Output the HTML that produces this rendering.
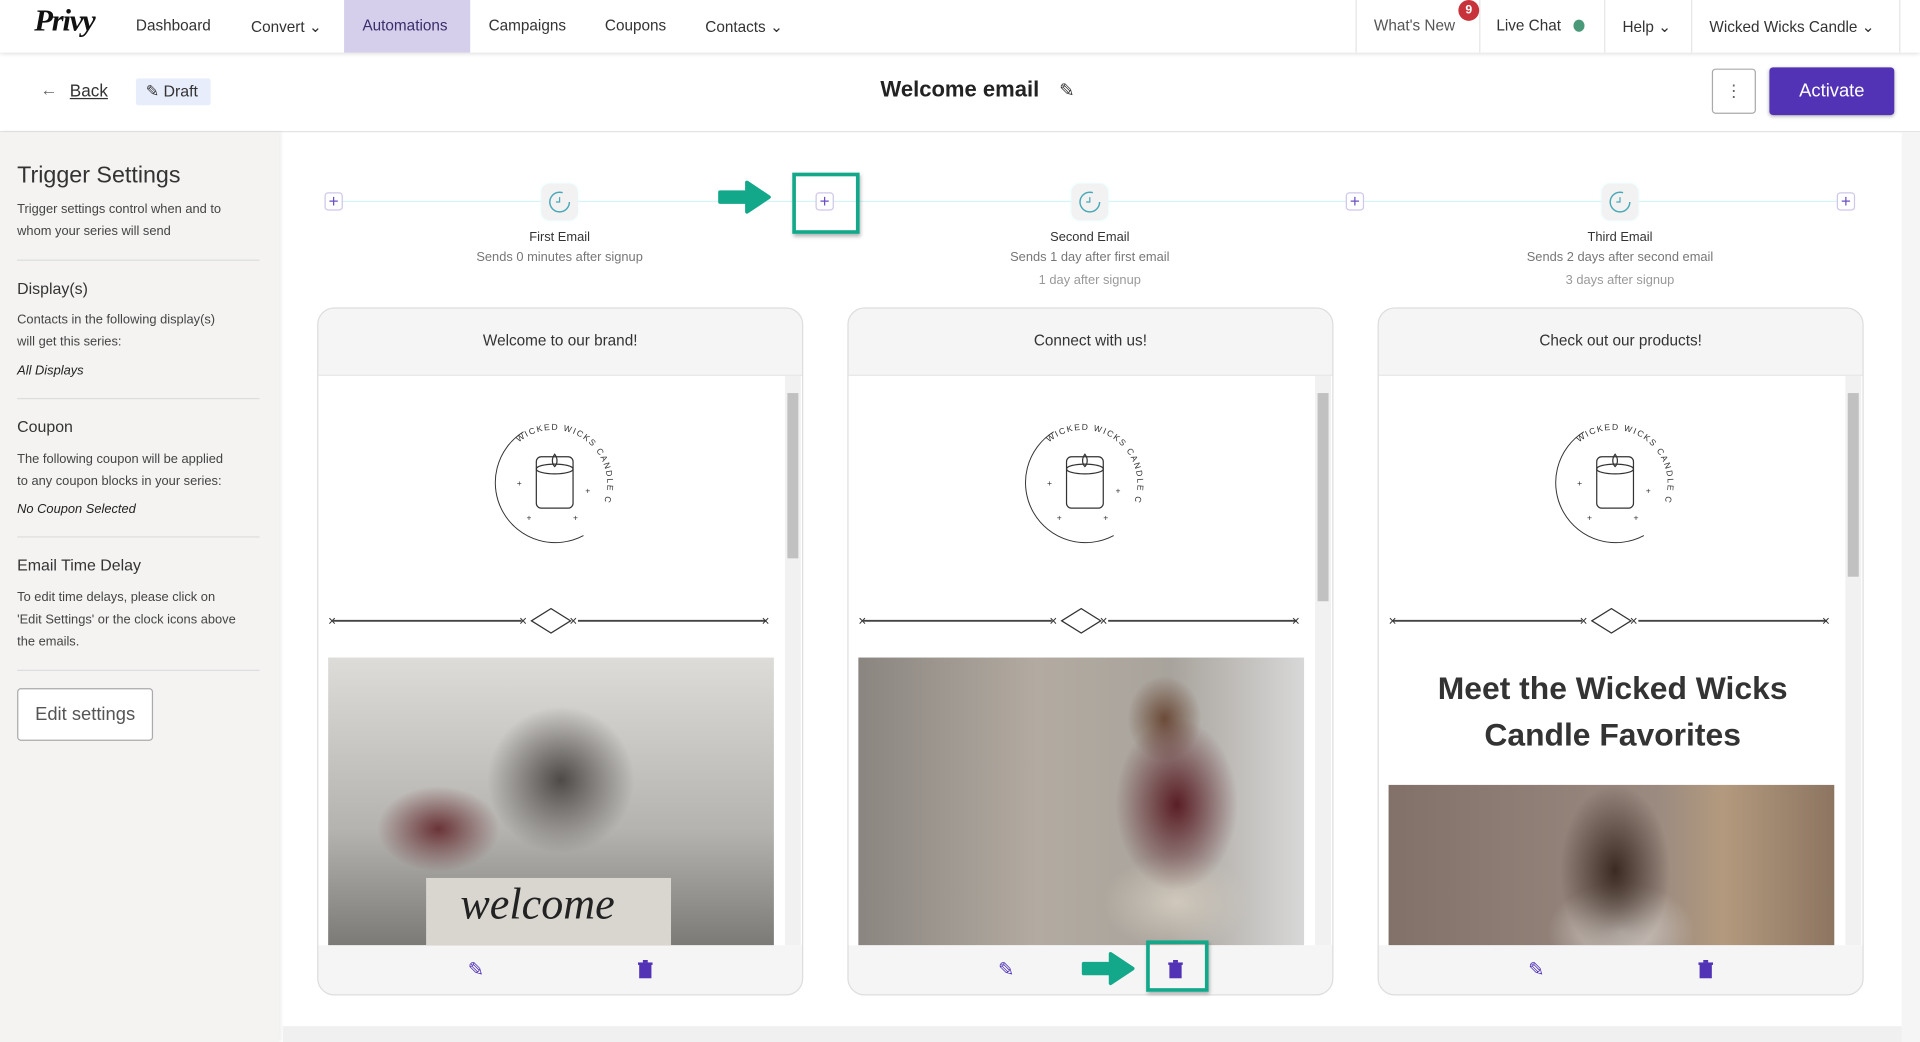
<!DOCTYPE html>
<html><head><meta charset="utf-8"><style>
*{box-sizing:border-box;margin:0;padding:0}
html,body{width:1920px;height:1042px;overflow:hidden;background:#fff;font-family:"Liberation Sans",sans-serif;color:#333}
#w{position:absolute;left:0;top:0;width:1568px;height:851px;transform:scale(1.22449);transform-origin:0 0;}
.a{position:absolute;white-space:nowrap}
.nav{font-size:12.5px;color:#333;top:14px}
.sep{position:absolute;top:0;width:1px;height:43px;background:#e6e6e6}
.sb{font-size:10.5px;color:#444;line-height:18px}
.hr{position:absolute;left:14px;width:198px;height:1px;background:#ddd}
.plus{position:absolute;width:15px;height:15px;border:1px solid #cfc6ea;border-radius:3px;background:#fff;color:#6a4fc0;font-size:14px;line-height:12px;text-align:center}
.clk{position:absolute;width:30px;height:30px;border-radius:7px;background:#f2f2f2;box-shadow:0 0 2px #dff}
.lbl{position:absolute;text-align:center;width:240px;font-size:10.5px;line-height:16px;color:#777}
.card{position:absolute;top:251px;width:397px;height:562px;border:1px solid #ddd;border-radius:14px;overflow:hidden;background:#f5f5f5}
.ch{height:55px;border-bottom:1px solid #e6e6e6;text-align:center;font-size:12.5px;line-height:53px;color:#333}
.cb{position:absolute;top:55px;left:0;width:395px;height:465px;background:#fff;overflow:hidden}
.scr{position:absolute;right:1px;top:0;width:13px;height:465px;background:#f1f1f1}
.thumb{position:absolute;left:2px;width:9px;background:#c1c1c1}
.ft{position:absolute;top:520px;left:0;width:395px;height:41px}
.img{position:absolute;left:8px;width:364px}
</style></head><body><div id="w">
<div class="a" style="left:0;top:0;width:1568px;height:43px;background:#fff;box-shadow:0 1px 3px rgba(0,0,0,.12);z-index:2">
 <div class="a" style="left:28px;top:4px;font-family:'Liberation Serif',serif;font-weight:bold;font-style:italic;font-size:25px;color:#111;letter-spacing:-1px">Privy</div>
 <div class="a nav" style="left:111px">Dashboard</div>
 <div class="a nav" style="left:205px">Convert ⌄</div>
 <div class="a" style="left:281px;top:0;width:103px;height:43px;background:#d6cfec"></div>
 <div class="a nav" style="left:296px;color:#3a2d6a">Automations</div>
 <div class="a nav" style="left:399px">Campaigns</div>
 <div class="a nav" style="left:494px">Coupons</div>
 <div class="a nav" style="left:576px">Contacts ⌄</div>
 <div class="sep" style="left:1107px"></div><div class="sep" style="left:1208px"></div><div class="sep" style="left:1310px"></div><div class="sep" style="left:1381px"></div><div class="sep" style="left:1551px"></div>
 <div class="a nav" style="left:1122px;color:#555">What's New</div>
 <div class="a" style="left:1191px;top:0;width:17px;height:17px;border-radius:50%;background:#c8323a;color:#fff;font-size:10px;font-weight:bold;text-align:center;line-height:17px">9</div>
 <div class="a nav" style="left:1222px">Live Chat</div>
 <div class="a" style="left:1285px;top:16px;width:9px;height:10px;border-radius:50%;background:#4a9a7a"></div>
 <div class="a nav" style="left:1325px">Help ⌄</div>
 <div class="a nav" style="left:1396px">Wicked Wicks Candle ⌄</div>
</div>
<div class="a" style="left:0;top:43px;width:1568px;height:65px;border-bottom:1px solid #e4e4e4;background:#fff">
 <div class="a" style="left:33px;top:22px;font-size:14px;color:#666">←</div>
 <div class="a" style="left:57px;top:23px;font-size:14px;color:#333;text-decoration:underline">Back</div>
 <div class="a" style="left:111px;top:21px;width:61px;height:22px;background:#e8edfc;border-radius:2px;font-size:13px;line-height:22px;color:#333;padding-left:8px">✎ Draft</div>
 <div class="a" style="left:719px;top:20px;font-size:18px;font-weight:bold;color:#222">Welcome email</div>
 <div class="a" style="left:865px;top:22px;font-size:15px;color:#333">✎</div>
 <div class="a" style="left:1398px;top:13px;width:36px;height:37px;border:1px solid #aaa;border-radius:3px;text-align:center;font-size:14px;line-height:34px;color:#666">⋮</div>
 <div class="a" style="left:1445px;top:12px;width:102px;height:39px;background:#5233b5;border-radius:3px;color:#fff;font-size:15px;text-align:center;line-height:39px;box-shadow:0 1px 3px rgba(0,0,0,.3)">Activate</div>
</div>
<div class="a" style="left:0;top:108px;width:228px;height:743px;background:#f4f3f2;box-shadow:2px 0 3px rgba(0,0,0,.08)">
 <div class="a" style="left:14px;top:25px;font-size:19px;color:#333">Trigger Settings</div>
 <div class="a sb" style="left:14px;top:54px">Trigger settings control when and to<br>whom your series will send</div>
 <div class="hr" style="top:104px"></div>
 <div class="a" style="left:14px;top:120px;font-size:13px;color:#333">Display(s)</div>
 <div class="a sb" style="left:14px;top:144px">Contacts in the following display(s)<br>will get this series:</div>
 <div class="a sb" style="left:14px;top:186px;font-style:italic;color:#222">All Displays</div>
 <div class="hr" style="top:217px"></div>
 <div class="a" style="left:14px;top:233px;font-size:13px;color:#333">Coupon</div>
 <div class="a sb" style="left:14px;top:258px">The following coupon will be applied<br>to any coupon blocks in your series:</div>
 <div class="a sb" style="left:14px;top:299px;font-style:italic;color:#222">No Coupon Selected</div>
 <div class="hr" style="top:330px"></div>
 <div class="a" style="left:14px;top:346px;font-size:13px;color:#333">Email Time Delay</div>
 <div class="a sb" style="left:14px;top:371px">To edit time delays, please click on<br>'Edit Settings' or the clock icons above<br>the emails.</div>
 <div class="hr" style="top:439px"></div>
 <div class="a" style="left:14px;top:454px;width:111px;height:43px;border:1px solid #aaa;border-radius:3px;background:#fff;font-size:15px;color:#555;text-align:center;line-height:41px">Edit settings</div>
</div>
<div class="a" style="left:1553px;top:108px;width:15px;height:743px;background:#f5f5f5"></div>
<div class="a" style="left:231px;top:838px;width:1322px;height:13px;background:#f0f0f0"></div>
<div class="a" style="left:272px;top:164px;width:1235px;height:1px;background:#d4f4f6"></div>
<div class="plus" style="left:265px;top:157px">+</div>
<div class="plus" style="left:666px;top:157px">+</div>
<div class="plus" style="left:1099px;top:157px">+</div>
<div class="plus" style="left:1500px;top:157px">+</div>
<div class="clk" style="left:442px;top:150px"><svg width="30" height="30"><circle cx="15" cy="15" r="8" fill="none" stroke="#4aa9b8" stroke-width="1.2" stroke-dasharray="40 10"/><path d="M15 11v4h-3" stroke="#4aa9b8" fill="none"/></svg></div>
<div class="clk" style="left:875px;top:150px"><svg width="30" height="30"><circle cx="15" cy="15" r="8" fill="none" stroke="#4aa9b8" stroke-width="1.2" stroke-dasharray="40 10"/><path d="M15 11v4h-3" stroke="#4aa9b8" fill="none"/></svg></div>
<div class="clk" style="left:1308px;top:150px"><svg width="30" height="30"><circle cx="15" cy="15" r="8" fill="none" stroke="#4aa9b8" stroke-width="1.2" stroke-dasharray="40 10"/><path d="M15 11v4h-3" stroke="#4aa9b8" fill="none"/></svg></div>
<div class="lbl" style="left:337px;top:186px"><span style="color:#333">First Email</span><br>Sends 0 minutes after signup</div>
<div class="lbl" style="left:770px;top:186px"><span style="color:#333">Second Email</span><br>Sends 1 day after first email<br><span style="line-height:22px;color:#999">1 day after signup</span></div>
<div class="lbl" style="left:1203px;top:186px"><span style="color:#333">Third Email</span><br>Sends 2 days after second email<br><span style="line-height:22px;color:#999">3 days after signup</span></div>
<div class="a" style="left:647px;top:141px;width:55px;height:50px;border:3px solid #13a88a;box-shadow:1px 2px 3px rgba(0,0,0,.3)"></div>
<svg class="a" style="left:586px;top:146px" width="44" height="30"><path d="M2 11h22V3l18 12-18 12v-8H2z" fill="#13a88a" stroke="#13a88a" stroke-linejoin="round" stroke-width="3"/></svg>

<div class="card" style="left:259px"><div class="ch">Welcome to our brand!</div>
 <div class="cb">
  <svg class="a" style="left:140px;top:36px" width="105" height="105"><defs><path id="tp1" d="M23.7 18.3A44 44 0 0 1 93.3 67"/></defs><path d="M76.5 94.4A49 49 0 0 1 27.5 9.6" fill="none" stroke="#333" stroke-width=".8"/><text font-size="7" fill="#333" letter-spacing="1.2"><textPath href="#tp1">WICKED WICKS CANDLE CO.</textPath></text><rect x="38" y="30" width="30" height="42" rx="4" fill="none" stroke="#333"/><ellipse cx="53" cy="40" rx="15" ry="4" fill="none" stroke="#333"/><path d="M53 28c-3 4-2 8 0 10 2-2 3-6 0-10z" fill="none" stroke="#333"/><text x="22" y="54" font-size="7" fill="#333">+</text><text x="78" y="60" font-size="7" fill="#333">+</text><text x="30" y="82" font-size="7" fill="#333">+</text><text x="68" y="82" font-size="7" fill="#333">+</text></svg>
  <svg class="a" style="left:8px;top:186px" width="366" height="30"><path d="M4 14h154M204 14h154" stroke="#444" stroke-width="1.5"/><path d="M166 14l16-10 16 10-16 10z" fill="none" stroke="#333"/><text x="0" y="18" font-size="11" fill="#333">×</text><text x="156" y="18" font-size="11" fill="#333">×</text><text x="197" y="18" font-size="11" fill="#333">×</text><text x="354" y="18" font-size="11" fill="#333">×</text></svg>
  <div class="img" style="top:230px;height:235px;background:radial-gradient(ellipse 60px 60px at 190px 100px,#4d4a47,transparent),radial-gradient(ellipse 50px 35px at 90px 140px,#6a3337,transparent),linear-gradient(180deg,#dedcd8,#b5b3af 60%,#7c7a77)">
   <div class="a" style="left:80px;top:180px;width:200px;height:60px;background:#d9d6d0;font-family:'Liberation Serif',serif;font-style:italic;font-size:36px;color:#222;padding-left:28px">welcome</div></div>
  <div class="scr"><div class="thumb" style="top:14px;height:135px"></div></div>
 </div>
 <div class="ft"><span class="a" style="left:122px;top:10px;color:#5233b5;font-size:16px">✎</span><svg class="a" style="left:261px;top:12px" width="12" height="15"><rect x="1" y="3" width="10" height="12" fill="#5233b5"/><rect x="0" y="2" width="12" height="2" fill="#5233b5"/><rect x="4" y="0" width="4" height="2" fill="#5233b5"/></svg></div>
</div>

<div class="card" style="left:692px"><div class="ch">Connect with us!</div>
 <div class="cb">
  <svg class="a" style="left:140px;top:36px" width="105" height="105"><defs><path id="tp2" d="M23.7 18.3A44 44 0 0 1 93.3 67"/></defs><path d="M76.5 94.4A49 49 0 0 1 27.5 9.6" fill="none" stroke="#333" stroke-width=".8"/><text font-size="7" fill="#333" letter-spacing="1.2"><textPath href="#tp2">WICKED WICKS CANDLE CO.</textPath></text><rect x="38" y="30" width="30" height="42" rx="4" fill="none" stroke="#333"/><ellipse cx="53" cy="40" rx="15" ry="4" fill="none" stroke="#333"/><path d="M53 28c-3 4-2 8 0 10 2-2 3-6 0-10z" fill="none" stroke="#333"/><text x="22" y="54" font-size="7" fill="#333">+</text><text x="78" y="60" font-size="7" fill="#333">+</text><text x="30" y="82" font-size="7" fill="#333">+</text><text x="68" y="82" font-size="7" fill="#333">+</text></svg>
  <svg class="a" style="left:8px;top:186px" width="366" height="30"><path d="M4 14h154M204 14h154" stroke="#444" stroke-width="1.5"/><path d="M166 14l16-10 16 10-16 10z" fill="none" stroke="#333"/><text x="0" y="18" font-size="11" fill="#333">×</text><text x="156" y="18" font-size="11" fill="#333">×</text><text x="197" y="18" font-size="11" fill="#333">×</text><text x="354" y="18" font-size="11" fill="#333">×</text></svg>
  <div class="img" style="top:230px;height:235px;background:radial-gradient(ellipse 50px 70px at 260px 120px,#5a1e26,transparent),radial-gradient(ellipse 30px 35px at 250px 50px,#6b4a38,transparent),radial-gradient(ellipse 60px 40px at 260px 200px,#d0c8bc,transparent),linear-gradient(90deg,#8a8580,#b3aba1 40%,#a8a39c 70%,#d8d8d8)"></div>
  <div class="scr"><div class="thumb" style="top:14px;height:170px"></div></div>
 </div>
 <div class="ft"><span class="a" style="left:122px;top:10px;color:#5233b5;font-size:16px">✎</span><svg class="a" style="left:261px;top:12px" width="12" height="15"><rect x="1" y="3" width="10" height="12" fill="#5233b5"/><rect x="0" y="2" width="12" height="2" fill="#5233b5"/><rect x="4" y="0" width="4" height="2" fill="#5233b5"/></svg></div>
</div>

<div class="card" style="left:1125px"><div class="ch">Check out our products!</div>
 <div class="cb">
  <svg class="a" style="left:140px;top:36px" width="105" height="105"><defs><path id="tp3" d="M23.7 18.3A44 44 0 0 1 93.3 67"/></defs><path d="M76.5 94.4A49 49 0 0 1 27.5 9.6" fill="none" stroke="#333" stroke-width=".8"/><text font-size="7" fill="#333" letter-spacing="1.2"><textPath href="#tp3">WICKED WICKS CANDLE CO.</textPath></text><rect x="38" y="30" width="30" height="42" rx="4" fill="none" stroke="#333"/><ellipse cx="53" cy="40" rx="15" ry="4" fill="none" stroke="#333"/><path d="M53 28c-3 4-2 8 0 10 2-2 3-6 0-10z" fill="none" stroke="#333"/><text x="22" y="54" font-size="7" fill="#333">+</text><text x="78" y="60" font-size="7" fill="#333">+</text><text x="30" y="82" font-size="7" fill="#333">+</text><text x="68" y="82" font-size="7" fill="#333">+</text></svg>
  <svg class="a" style="left:8px;top:186px" width="366" height="30"><path d="M4 14h154M204 14h154" stroke="#444" stroke-width="1.5"/><path d="M166 14l16-10 16 10-16 10z" fill="none" stroke="#333"/><text x="0" y="18" font-size="11" fill="#333">×</text><text x="156" y="18" font-size="11" fill="#333">×</text><text x="197" y="18" font-size="11" fill="#333">×</text><text x="354" y="18" font-size="11" fill="#333">×</text></svg>
  <div class="a" style="left:0;top:236px;width:382px;text-align:center;font-size:26px;font-weight:bold;line-height:38px;color:#333;white-space:normal">Meet the Wicked Wicks<br>Candle Favorites</div>
  <div class="img" style="top:334px;height:131px;background:radial-gradient(ellipse 45px 70px at 185px 70px,#3a2a22,transparent),radial-gradient(ellipse 60px 40px at 190px 120px,#d8d2cc,transparent),linear-gradient(90deg,#827169,#9a8a80 60%,#b39a7e 75%,#8c7561)"></div>
  <div class="scr"><div class="thumb" style="top:14px;height:150px"></div></div>
 </div>
 <div class="ft"><span class="a" style="left:122px;top:10px;color:#5233b5;font-size:16px">✎</span><svg class="a" style="left:261px;top:12px" width="12" height="15"><rect x="1" y="3" width="10" height="12" fill="#5233b5"/><rect x="0" y="2" width="12" height="2" fill="#5233b5"/><rect x="4" y="0" width="4" height="2" fill="#5233b5"/></svg></div>
</div>

<div class="a" style="left:936px;top:768px;width:51px;height:42px;border:3px solid #13a88a;box-shadow:1px 2px 3px rgba(0,0,0,.3)"></div>
<svg class="a" style="left:883px;top:776px" width="46" height="30"><path d="M2 11h22V3l18 12-18 12v-8H2z" fill="#13a88a" stroke="#13a88a" stroke-linejoin="round" stroke-width="3"/></svg>
</div></body></html>
